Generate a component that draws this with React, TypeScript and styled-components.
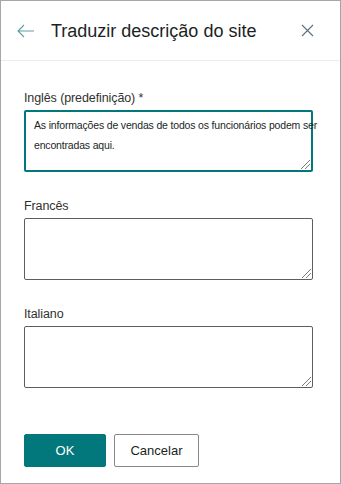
import React from "react";
import styled, { createGlobalStyle } from "styled-components";

const GlobalStyle = createGlobalStyle`
  html, body {
    margin: 0;
    padding: 0;
    background: #ffffff;
  }
  * {
    box-sizing: border-box;
  }
`;

const Panel = styled.div`
  width: 341px;
  height: 484px;
  border: 1px solid #a6a6a6;
  background: #ffffff;
  display: flex;
  flex-direction: column;
  font-family: "Liberation Sans", Arial, sans-serif;
  color: #323130;
`;

const Header = styled.div`
  height: 60px;
  display: flex;
  align-items: center;
  padding: 0 24px 0 16px;
  border-bottom: 1px solid #edebe9;
`;

const IconButton = styled.button`
  border: none;
  background: none;
  padding: 0;
  width: 18px;
  height: 18px;
  display: flex;
  align-items: center;
  justify-content: center;
  cursor: pointer;
`;

const Title = styled.h1`
  flex: 1;
  margin: 0 0 0 16px;
  font-size: 18px;
  font-weight: 400;
  color: #201f1e;
  padding-top: 1px;
`;

const Body = styled.div`
  flex: 1;
  display: flex;
  flex-direction: column;
  padding: 27px 0 0 23px;
`;

const Field = styled.div`
  display: flex;
  flex-direction: column;
  margin-bottom: 24px;
`;

const Label = styled.label`
  font-size: 12.5px;
  line-height: 20px;
  margin-bottom: 2px;
  color: #323130;
  letter-spacing: -0.1px;
`;

const TextBox = styled.div<{ $active?: boolean }>`
  position: relative;
  width: 289px;
  height: 62px;
  padding: ${(p) => (p.$active ? "3px 0 0 8px" : "4px 0 0 9px")};
  border: ${(p) => (p.$active ? "2px solid #03787c" : "1px solid #605e5c")};
  border-radius: 2px;
  font-size: 10.5px;
  line-height: 20px;
  letter-spacing: -0.17px;
  color: #201f1e;
  white-space: pre;
  outline: none;
`;

const Grip = styled.svg`
  position: absolute;
  right: 1px;
  bottom: 1px;
`;

const Actions = styled.div`
  display: flex;
  gap: 8px;
  margin-top: 22px;
`;

const Button = styled.button<{ $primary?: boolean }>`
  height: 33px;
  width: ${(p) => (p.$primary ? "82px" : "85px")};
  border-radius: 2px;
  border: 1px solid ${(p) => (p.$primary ? "#03787c" : "#8a8886")};
  background: ${(p) => (p.$primary ? "#03787c" : "#ffffff")};
  color: ${(p) => (p.$primary ? "#ffffff" : "#201f1e")};
  font-family: "Liberation Sans", Arial, sans-serif;
  font-size: 13px;
  padding: 0;
  cursor: pointer;
`;

const BackIcon = () => (
  <svg width="18" height="14" viewBox="0 0 18 14">
    <path d="M1 7 H17 M7 1 L1 7 L7 13" fill="none" stroke="#5f9ea1" strokeWidth="1.1" />
  </svg>
);

const CloseIcon = () => (
  <svg width="13" height="13" viewBox="0 0 13 13">
    <path d="M1 1 L12 12 M12 1 L1 12" fill="none" stroke="#5b6e80" strokeWidth="1.1" />
  </svg>
);

const ResizeGrip = () => (
  <Grip width="10" height="10" viewBox="0 0 10 10">
    <path d="M1 10 L10 1 M5 10 L10 5" fill="none" stroke="#6b6b6b" strokeWidth="0.9" />
  </Grip>
);

const fields = [
  {
    label: "Inglês (predefinição) *",
    value: "As informações de vendas de todos os funcionários podem ser\nencontradas aqui.",
    active: true,
  },
  { label: "Francês", value: "", active: false },
  { label: "Italiano", value: "", active: false },
];

export default function App() {
  return (
    <>
      <GlobalStyle />
      <Panel>
        <Header>
          <IconButton aria-label="Voltar">
            <BackIcon />
          </IconButton>
          <Title>Traduzir descrição do site</Title>
          <IconButton aria-label="Fechar">
            <CloseIcon />
          </IconButton>
        </Header>
        <Body>
          {fields.map((f) => (
            <Field key={f.label}>
              <Label>{f.label}</Label>
              <TextBox
                $active={f.active}
                role="textbox"
                aria-multiline="true"
                contentEditable
                suppressContentEditableWarning
              >
                {f.value}
                <ResizeGrip />
              </TextBox>
            </Field>
          ))}
          <Actions>
            <Button $primary>OK</Button>
            <Button>Cancelar</Button>
          </Actions>
        </Body>
      </Panel>
    </>
  );
}
